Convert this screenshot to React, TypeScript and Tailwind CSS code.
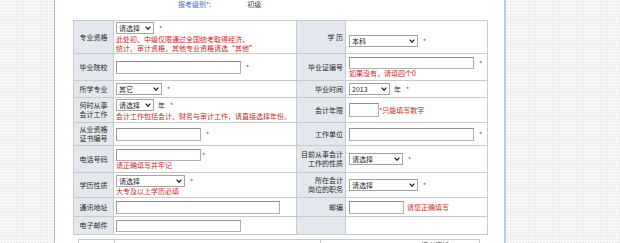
import React from "react";

const RED = "text-[#cc1f1f]";

function Chevron() {
  return (
    <svg width="6" height="4" viewBox="0 0 6 4" className="shrink-0">
      <path d="M0.6 0.6 L3 3.2 L5.4 0.6" fill="none" stroke="#222" strokeWidth="1.3" />
    </svg>
  );
}

function Sel({ text, className }: { text: string; className: string }) {
  return (
    <div
      className={
        "flex items-center justify-between h-[12px] border border-[#a3a3a3] bg-white pl-[2px] pr-[2px] text-[7px] leading-[8px] text-[#222] " +
        className
      }
    >
      <span>{text}</span>
      <Chevron />
    </div>
  );
}

function Inp({ className }: { className: string }) {
  return (
    <div
      className={
        "border border-[#b0b0b0] border-t-[#8e8e8e] border-l-[#999] bg-white " + className
      }
    />
  );
}

function Star({ className = "ml-[5px]" }: { className?: string }) {
  return <span className={RED + " text-[7px] leading-[8px] " + className}>*</span>;
}

function Note({ children }: { children: React.ReactNode }) {
  return <div className={RED + " text-[7px] leading-[9px] whitespace-nowrap"}>{children}</div>;
}

function LabelL({ children }: { children: React.ReactNode }) {
  return (
    <td className="border border-[#c9c9c9] bg-[#e3e8ee] text-center align-middle text-[7px] leading-[9px] text-[#2a2a2a] p-0">
      {children}
    </td>
  );
}

function LabelR({ children }: { children: React.ReactNode }) {
  return (
    <td className="border border-[#c9c9c9] bg-[#e3e8ee] text-right align-middle text-[7px] leading-[9px] text-[#2a2a2a] p-0 pr-[2px] whitespace-nowrap">
      {children}
    </td>
  );
}

function ValL({ children }: { children?: React.ReactNode }) {
  return <td className="border border-[#c9c9c9] bg-white align-middle p-0 pl-[2px]">{children}</td>;
}

function ValR({ children }: { children?: React.ReactNode }) {
  return <td className="border border-[#c9c9c9] bg-white align-middle p-0 pl-[3px]">{children}</td>;
}

export default function App() {
  const grid =
    "bg-[#eeeeee] bg-[linear-gradient(90deg,#f8f8f8_1px,transparent_1px),linear-gradient(#f8f8f8_1px,transparent_1px)] bg-[size:3px_3px]";
  return (
    <div className="flex w-[620px] h-[243px] overflow-hidden font-['Noto_Sans_CJK_SC','Noto_Sans',sans-serif]">
      <div className={"w-[54px] shrink-0 " + grid} />
      <div className="w-[452px] shrink-0 bg-white border-l border-[#9fc5cf] border-r-2 border-r-[#b3d0e2] flex flex-col">
        <div className="h-[20px] shrink-0 flex items-start text-[7px] leading-[8px]">
          <span className="ml-[123px] text-[#3a6fc4]">报考级别*:</span>
          <span className="ml-[36px] text-[#444]">初级</span>
        </div>
        <div className="pl-[18px]">
          <table className="border-collapse table-fixed w-[414px]">
            <colgroup>
              <col className="w-[40px]" />
              <col className="w-[183px]" />
              <col className="w-[49px]" />
              <col className="w-[142px]" />
            </colgroup>
            <tbody>
              <tr className="h-[33px]">
                <LabelL>专业资格</LabelL>
                <ValL>
                  <div className="flex flex-col gap-[1px]">
                    <div className="flex items-center">
                      <Sel text="请选择" className="w-[38px]" />
                      <Star />
                    </div>
                    <div>
                      <Note>此处初、中级仅限通过全国统考取得经济、</Note>
                      <Note>统计、审计资格，其他专业资格请选“其他”</Note>
                    </div>
                  </div>
                </ValL>
                <LabelR>学 历</LabelR>
                <ValR>
                  <div className="flex items-center mt-[8px]">
                    <Sel text="本科" className="w-[69px]" />
                    <Star />
                  </div>
                </ValR>
              </tr>
              <tr className="h-[27px]">
                <LabelL>毕业院校</LabelL>
                <ValL>
                  <div className="flex items-center">
                    <Inp className="w-[125px] h-[13px]" />
                    <Star />
                  </div>
                </ValL>
                <LabelR>毕业证编号</LabelR>
                <ValR>
                  <div className="flex flex-col">
                    <div className="flex items-center">
                      <Inp className="w-[125px] h-[12px]" />
                      <Star />
                    </div>
                    <Note>如果没有，请填四个0</Note>
                  </div>
                </ValR>
              </tr>
              <tr className="h-[17px]">
                <LabelL>所学专业</LabelL>
                <ValL>
                  <div className="flex items-center">
                    <Sel text="其它" className="w-[46px]" />
                    <Star />
                  </div>
                </ValL>
                <LabelR>毕业时间</LabelR>
                <ValR>
                  <div className="flex items-center">
                    <Sel text="2013" className="w-[41px]" />
                    <span className="ml-[4px] text-[7px] leading-[8px] text-[#333]">年</span>
                    <Star />
                  </div>
                </ValR>
              </tr>
              <tr className="h-[25px]">
                <LabelL>
                  何时从事
                  <br />
                  会计工作
                </LabelL>
                <ValL>
                  <div className="flex flex-col gap-[1px]">
                    <div className="flex items-center">
                      <Sel text="请选择" className="w-[38px]" />
                      <span className="ml-[4px] text-[7px] leading-[8px] text-[#333]">年</span>
                      <Star />
                    </div>
                    <Note>会计工作包括会计、财务与审计工作，请直接选择年份。</Note>
                  </div>
                </ValL>
                <LabelR>会计年限</LabelR>
                <ValR>
                  <div className="flex items-center">
                    <Inp className="w-[30px] h-[14px]" />
                    <Note>*只能填写数字</Note>
                  </div>
                </ValR>
              </tr>
              <tr className="h-[23px]">
                <LabelL>
                  从业资格
                  <br />
                  证书编号
                </LabelL>
                <ValL>
                  <div className="flex items-center">
                    <Inp className="w-[85px] h-[13px]" />
                    <Star />
                  </div>
                </ValL>
                <LabelR>工作单位</LabelR>
                <ValR>
                  <div className="flex items-center">
                    <Inp className="w-[125px] h-[13px]" />
                    <Star />
                  </div>
                </ValR>
              </tr>
              <tr className="h-[27px]">
                <LabelL>电话号码</LabelL>
                <ValL>
                  <div className="flex flex-col">
                    <div className="flex items-start">
                      <Inp className="w-[85px] h-[12px]" />
                      <Star className="ml-[1px] mt-[2px]" />
                    </div>
                    <Note>请正确填写并牢记</Note>
                  </div>
                </ValL>
                <td className="border border-[#c9c9c9] bg-[#e3e8ee] text-right align-middle text-[7px] leading-[9px] text-[#2a2a2a] p-0 whitespace-nowrap overflow-visible">
                  <div className="-ml-[4px] pr-[2px]">
                    目前从事会计
                    <br />
                    工作的性质
                  </div>
                </td>
                <ValR>
                  <div className="flex items-center">
                    <Sel text="请选择" className="w-[54px]" />
                    <Star />
                  </div>
                </ValR>
              </tr>
              <tr className="h-[25px]">
                <LabelL>学历性质</LabelL>
                <ValL>
                  <div className="flex flex-col">
                    <div className="flex items-center">
                      <Sel text="请选择" className="w-[69px]" />
                      <Star />
                    </div>
                    <Note>大专及以上学历必填</Note>
                  </div>
                </ValL>
                <LabelR>
                  所在会计
                  <br />
                  岗位的职务
                </LabelR>
                <ValR>
                  <div className="flex items-center">
                    <Sel text="请选择" className="w-[69px]" />
                    <Star />
                  </div>
                </ValR>
              </tr>
              <tr className="h-[19px]">
                <LabelL>通讯地址</LabelL>
                <ValL>
                  <Inp className="w-[164px] h-[13px]" />
                </ValL>
                <LabelR>邮编</LabelR>
                <ValR>
                  <div className="flex items-center">
                    <Inp className="w-[55px] h-[13px]" />
                    <span className={RED + " ml-[3px] text-[7px] leading-[8px]"}>请您正确填写</span>
                  </div>
                </ValR>
              </tr>
              <tr className="h-[18px]">
                <LabelL>电子邮件</LabelL>
                <ValL>
                  <Inp className="w-[125px] h-[12px]" />
                </ValL>
                <td className="border border-[#c9c9c9] bg-[#e3e8ee] p-0" />
                <td className="border border-[#c9c9c9] bg-white p-0" />
              </tr>
            </tbody>
          </table>
          <div className="flex mt-[4px] h-[12px]">
            <div className="ml-[5px] w-[37px] h-[12px] border border-[#c9c9c9] bg-white" />
            <div className="w-[205px] h-[12px] border-t border-[#c9c9c9]" />
            <div className="w-[160px] h-[12px] border border-[#c9c9c9] bg-white flex justify-center">
              <span className="ml-[70px] mt-[1px] text-[7px] leading-[8px] text-[#333]">报考须知</span>
            </div>
          </div>
        </div>
      </div>
      <div className={"flex-1 " + grid} />
    </div>
  );
}
